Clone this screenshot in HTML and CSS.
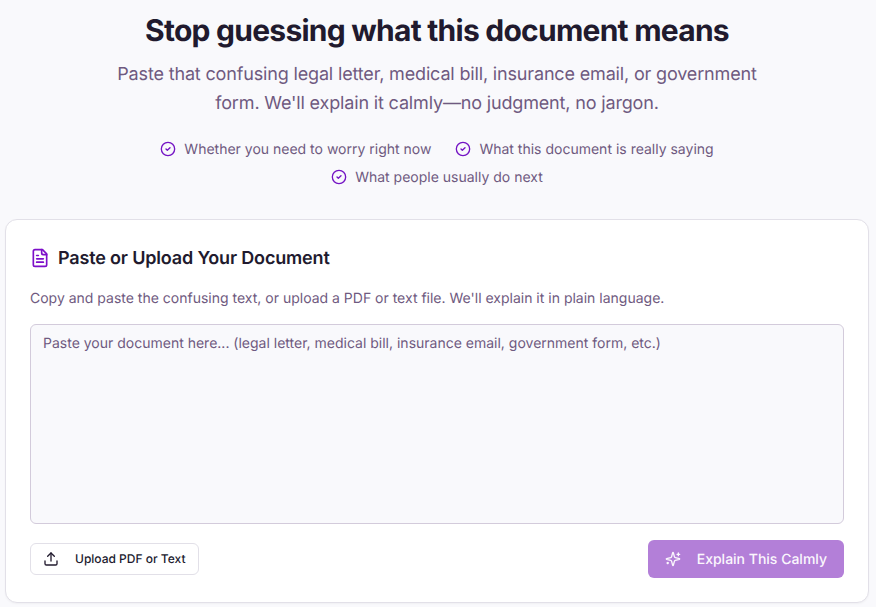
FILE: index.html
```html
<!DOCTYPE html>
<html lang="en">
<head>
<meta charset="utf-8">
<title>Explain This Calmly</title>
<link rel="stylesheet" href="styles.css">
</head>
<body>
<main class="page">
  <section class="hero">
    <h1 class="title">Stop guessing what this document means</h1>
    <p class="lead">Paste that confusing legal letter, medical bill, insurance email, or government form. We'll explain it calmly—no judgment, no jargon.</p>
    <ul class="points">
      <li class="point"><svg class="point-icon" viewBox="0 0 24 24"><circle cx="12" cy="12" r="10"/><path d="m9 12 2 2 4-4"/></svg>Whether you need to worry right now</li>
      <li class="point"><svg class="point-icon" viewBox="0 0 24 24"><circle cx="12" cy="12" r="10"/><path d="m9 12 2 2 4-4"/></svg>What this document is really saying</li>
      <li class="point"><svg class="point-icon" viewBox="0 0 24 24"><circle cx="12" cy="12" r="10"/><path d="m9 12 2 2 4-4"/></svg>What people usually do next</li>
    </ul>
  </section>
  <section class="card">
    <h2 class="card-title"><svg class="doc-icon" viewBox="0 0 24 24"><path d="M15 2H6a2 2 0 0 0-2 2v16a2 2 0 0 0 2 2h12a2 2 0 0 0 2-2V7Z"/><path d="M14 2v4a2 2 0 0 0 2 2h4"/><path d="M10 9H8"/><path d="M16 13H8"/><path d="M16 17H8"/></svg>Paste or Upload Your Document</h2>
    <p class="card-desc">Copy and paste the confusing text, or upload a PDF or text file. We'll explain it in plain language.</p>
    <textarea class="doc-input" placeholder="Paste your document here... (legal letter, medical bill, insurance email, government form, etc.)"></textarea>
    <div class="actions">
      <button class="btn-upload" type="button"><svg class="upload-icon" viewBox="0 0 24 24"><path d="M21 15v4a2 2 0 0 1-2 2H5a2 2 0 0 1-2-2v-4"/><polyline points="17 8 12 3 7 8"/><line x1="12" y1="3" x2="12" y2="15"/></svg>Upload PDF or Text</button>
      <button class="btn-primary" type="button"><svg class="spark-icon" viewBox="0 0 24 24"><path d="M9.937 15.5A2 2 0 0 0 8.5 14.063l-6.135-1.582a.5.5 0 0 1 0-.962L8.5 9.936A2 2 0 0 0 9.937 8.5l1.582-6.135a.5.5 0 0 1 .963 0L14.063 8.5A2 2 0 0 0 15.5 9.937l6.135 1.581a.5.5 0 0 1 0 .964L15.5 14.063a2 2 0 0 0-1.437 1.437l-1.582 6.135a.5.5 0 0 1-.963 0z"/><path d="M20 3v4"/><path d="M22 5h-4"/><path d="M4 17v2"/><path d="M5 18H3"/></svg>Explain This Calmly</button>
    </div>
  </section>
</main>
</body>
</html>
```
FILE: styles.css
```css
* { box-sizing: border-box; }
html, body { height: 100%; }
body {
  margin: 0;
  background: #f9f9fc;
  color: #211a2e;
  font-family: Inter, "Liberation Sans", sans-serif;
  text-rendering: geometricPrecision;
  overflow: hidden;
}
svg { fill: none; stroke: currentColor; stroke-width: 2; stroke-linecap: round; stroke-linejoin: round; flex: none; }
.page { padding: 11px 7px 0 5px; }
.hero { text-align: center; }
.title { margin: 0; font-size: 30px; line-height: 40px; font-weight: 700; letter-spacing: -0.75px; color: #211a2e; }
.lead {
  margin: 9px auto 0;
  width: 672px;
  font-size: 18px;
  line-height: 29px;
  letter-spacing: -0.16px;
  color: #6f5a80;
}
.points {
  list-style: none;
  margin: 22px auto 0;
  padding: 0;
  width: 672px;
  display: flex;
  flex-wrap: wrap;
  justify-content: center;
  gap: 8px 24px;
}
.point {
  display: flex;
  align-items: center;
  gap: 8px;
  font-size: 14px;
  line-height: 20px;
  color: #6f5a80;
}
.point-icon { width: 16px; height: 16px; margin-top: -2px; color: #7413c4; }
.card {
  margin-top: 31px;
  height: 384px;
  background: #fff;
  border: 1px solid #e2e0e8;
  border-radius: 12px;
  padding: 24px;
  box-shadow: 0 1px 2px rgba(0,0,0,.04);
}
.card-title {
  margin: 1px 0 0;
  display: flex;
  align-items: center;
  gap: 8px;
  font-size: 18px;
  line-height: 28px;
  font-weight: 600;
  letter-spacing: -0.17px;
  color: #211a2e;
}
.doc-icon { width: 20px; height: 20px; margin-top: -2px; color: #7d0fc9; }
.card-desc { margin: 16px 0 0; font-size: 14px; line-height: 20px; color: #6f5a80; }
.doc-input {
  display: block;
  margin-top: 15px;
  width: 100%;
  height: 200px;
  padding: 9px 12px 8px;
  resize: none;
  background: #f9f9fc;
  border: 1px solid #d3cbdb;
  border-radius: 6px;
  font: 14px/20px Inter, "Liberation Sans", sans-serif;
  text-rendering: geometricPrecision;
  color: #211a2e;
}
.doc-input::placeholder { color: #6f5a80; opacity: 1; }
.actions { margin-top: 16px; display: flex; justify-content: space-between; align-items: center; }
.btn-upload {
  display: flex;
  align-items: center;
  gap: 16px;
  height: 32px;
  padding: 0 12px;
  background: #fff;
  border: 1px solid #e2e0e8;
  border-radius: 6px;
  font: 500 12px/16px Inter, "Liberation Sans", sans-serif;
  text-rendering: geometricPrecision;
  color: #211a2e;
}
.upload-icon { width: 16px; height: 16px; }
.btn-primary {
  display: flex;
  align-items: center;
  gap: 16px;
  height: 38px;
  padding: 2px 17px 0;
  background: #b37fd8;
  border: 0;
  border-radius: 6px;
  font: 500 14px/20px Inter, "Liberation Sans", sans-serif;
  text-rendering: geometricPrecision;
  color: #fbf7fd;
}
.spark-icon { width: 16px; height: 16px; margin-top: -2px; }
```
